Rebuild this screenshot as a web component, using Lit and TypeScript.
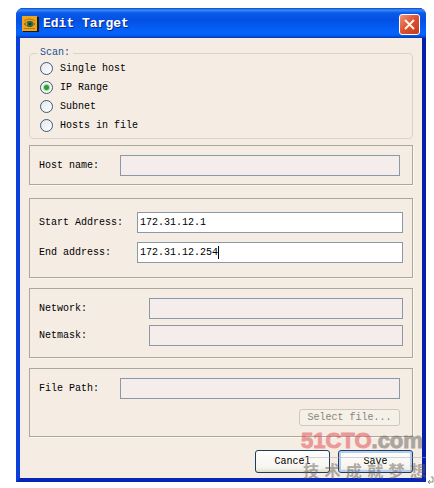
import { LitElement, html, css, svg } from "lit";
import { customElement, state } from "lit/decorators.js";

const MODES = ["Single host", "IP Range", "Subnet", "Hosts in file"];

const eyeIcon = svg`
  <svg class="app-icon" width="17" height="16" viewBox="0 0 17 16" aria-hidden="true">
    <rect x="1" y="1" width="16" height="15" fill="#1a1a1a"/>
    <rect width="15" height="15" fill="#f0a41c"/>
    <path d="M2 8Q7.500 3 13 8Q7.500 13 2 8Z" fill="#d9a032" stroke="#8a6418"/>
    <path d="M2 5Q7 1 13 5" fill="none" stroke="#a87818"/>
    <circle cx="8" cy="8" r="3" fill="#1f6b4c"/>
    <circle cx="8" cy="8" r="1" fill="#0c2a3a"/>
    <path d="M2 12.500H13" stroke="#b87a14"/>
  </svg>`;

@customElement("app-root")
export class AppRoot extends LitElement {
  @state() private mode = "IP Range";

  static styles = css`
    :host {
      display: block;
      position: relative;
      background: #fff;
      padding: 8px 8px 6px 16px;
      font: 10px/14px "Liberation Mono", "Noto Sans CJK SC", monospace;
      color: #000;
    }
    * { box-sizing: border-box; }
    input, button { font: inherit; color: inherit; }
    .window {
      position: relative;
      border: solid;
      border-width: 0 4px 4px;
      border-color: #0a2fd0 #0520a8 #0526b4 #0a3fdc;
      border-radius: 7px 7px 0 0;
      background: #0a3fdc;
    }
    .titlebar {
      display: flex;
      align-items: center;
      gap: 4px;
      height: 30px;
      margin: 0 -4px;
      padding: 2px 6px 0;
      border-radius: 7px 7px 0 0;
      background: linear-gradient(#0b44c8 0, #3a8cf8 2px, #0a5ae8 5px, #0450e4 12px, #0463fb 24px, #0460f6 27px, #0338b8 30px);
      color: #fff;
    }
    h1 {
      flex: 1;
      margin: 0;
      font-size: 13px;
      line-height: 16px;
      font-weight: bold;
      text-shadow: 1px 1px 0 #0a2a80;
    }
    .close {
      width: 21px;
      height: 21px;
      padding: 0;
      border: 1px solid #fff;
      border-radius: 3px;
      background: linear-gradient(135deg, #ee9478, #dc5030 50%, #c03c1c);
      display: grid;
      place-items: center;
    }
    .body {
      background: #f5ede4;
      padding: 9px 9px 5px;
    }
    .scan {
      margin: 0 0 6px;
      padding: 0 10px 3px;
      border: 1px solid #d8d4c8;
      border-radius: 4px;
      min-width: 0;
    }
    legend {
      margin-left: -3px;
      padding: 0 3px;
      line-height: 12px;
      color: #24508e;
    }
    .choice {
      display: flex;
      align-items: center;
      gap: 7px;
      height: 19px;
    }
    .choice input {
      appearance: none;
      width: 13px;
      height: 13px;
      margin: 0;
      border: 1px solid #3c5a78;
      border-radius: 50%;
      background: linear-gradient(135deg, #e4e6ea, #fff);
    }
    .choice input:checked {
      background: radial-gradient(circle, #2fa02f 0 2px, #a8d8a0 3px, #f4f8f4 4px);
    }
    .panel {
      border: 1px solid #a8a89c;
      box-shadow: 1px 1px 0 #fdf8f0;
      padding: 9px;
      margin-bottom: 10px;
    }
    .panel.host { margin-bottom: 13px; padding: 9px 12px 8px 9px; }
    .panel.range { padding: 13px 9px 14px; }
    .panel.net { padding-bottom: 11px; }
    .panel.file { padding: 9px 12px 10px 9px; margin-bottom: 13px; }
    .row {
      display: grid;
      grid-template-columns: 81px 1fr;
      align-items: center;
    }
    .range .row { grid-template-columns: 98px 1fr; }
    .range .row + .row { margin-top: 9px; }
    .net .row { grid-template-columns: 110px 1fr; }
    .net .row + .row { margin-top: 6px; }
    .field { position: relative; display: flex; }
    .field input {
      width: 100%;
      height: 21px;
      padding: 0 2px;
      border: 1px solid #8a98a8;
      border-radius: 0;
      background: #fff;
      outline: none;
    }
    .field input:disabled { background: #f5ecec; }
    .caret {
      position: absolute;
      left: calc(3px + 13ch);
      top: 4px;
      width: 1px;
      height: 13px;
      background: #000;
    }
    .actions { display: flex; justify-content: flex-end; gap: 8px; }
    .btn {
      width: 75px;
      height: 23px;
      padding: 0;
      border: 1px solid #1c3c60;
      border-radius: 3px;
      background: linear-gradient(#fff, #f6f4ee 80%, #e0dccc);
    }
    .btn.primary { box-shadow: inset 0 0 0 2px #b4ccf0; }
    .btn.pick {
      width: 101px;
      height: 17px;
      line-height: 12px;
      margin-top: 10px;
      color: #8a8378;
      border-color: #cfc8bc;
      background: #f5f0e8;
    }
    .mark {
      position: absolute;
      right: -4px;
      bottom: -2px;
      width: 125px;
      opacity: 0.5;
      pointer-events: none;
      color: #66605c;
    }
    .brand {
      font: bold 22px/28px "Liberation Sans", sans-serif;
      white-space: nowrap;
      -webkit-text-stroke: 1px;
      border-bottom: 1px solid #aaa;
      padding-bottom: 2px;
    }
    .brand b { color: #e04850; }
    .slogan {
      display: flex;
      justify-content: space-between;
      font: bold 16px/20px "Noto Sans CJK SC", sans-serif;
      padding: 2px 0 0 2px;
    }
    .return { position: absolute; right: 0; bottom: 3px; }
  `;

  private field(id: string, label: string, value = "", enabled = false, caret = false) {
    return html`
      <div class="row">
        <label for=${id}>${label}</label>
        <div class="field">
          <input id=${id} type="text" .value=${value} ?disabled=${!enabled} />
          ${caret ? html`<span class="caret"></span>` : ""}
        </div>
      </div>`;
  }

  render() {
    return html`
      <div class="window" role="dialog" aria-labelledby="title">
        <header class="titlebar">
          ${eyeIcon}
          <h1 id="title">Edit Target</h1>
          <button class="close" aria-label="Close">
            <svg width="13" height="13" viewBox="0 0 13 13">
              <path d="M2 2L11 11M11 2L2 11" stroke="#fff4e4" stroke-width="2"/>
            </svg>
          </button>
        </header>
        <div class="body">
          <fieldset class="scan">
            <legend>Scan:</legend>
            ${MODES.map((m) => html`
              <label class="choice">
                <input type="radio" name="mode" .checked=${this.mode === m}
                  @change=${() => (this.mode = m)} />${m}
              </label>`)}
          </fieldset>
          <section class="panel host">${this.field("host", "Host name:")}</section>
          <section class="panel range">
            ${this.field("start", "Start Address:", "172.31.12.1", true)}
            ${this.field("end", "End address:", "172.31.12.254", true, true)}
          </section>
          <section class="panel net">
            ${this.field("network", "Network:")}
            ${this.field("netmask", "Netmask:")}
          </section>
          <section class="panel file">
            ${this.field("path", "File Path:")}
            <div class="actions"><button class="btn pick" disabled>Select file...</button></div>
          </section>
          <div class="actions">
            <button class="btn">Cancel</button>
            <button class="btn primary">Save</button>
          </div>
        </div>
        <div class="mark">
          <div class="brand"><b>51CTO</b>.com</div>
          <div class="slogan">${[..."技术成就梦想"].map((c) => html`<span>${c}</span>`)}</div>
        </div>
      </div>
      <svg class="return" width="7" height="9" viewBox="0 0 7 9" aria-hidden="true">
        <path d="M4 1H6V6H1M3 4L1 6L3 8" fill="none" stroke="#888"/>
      </svg>`;
  }
}
